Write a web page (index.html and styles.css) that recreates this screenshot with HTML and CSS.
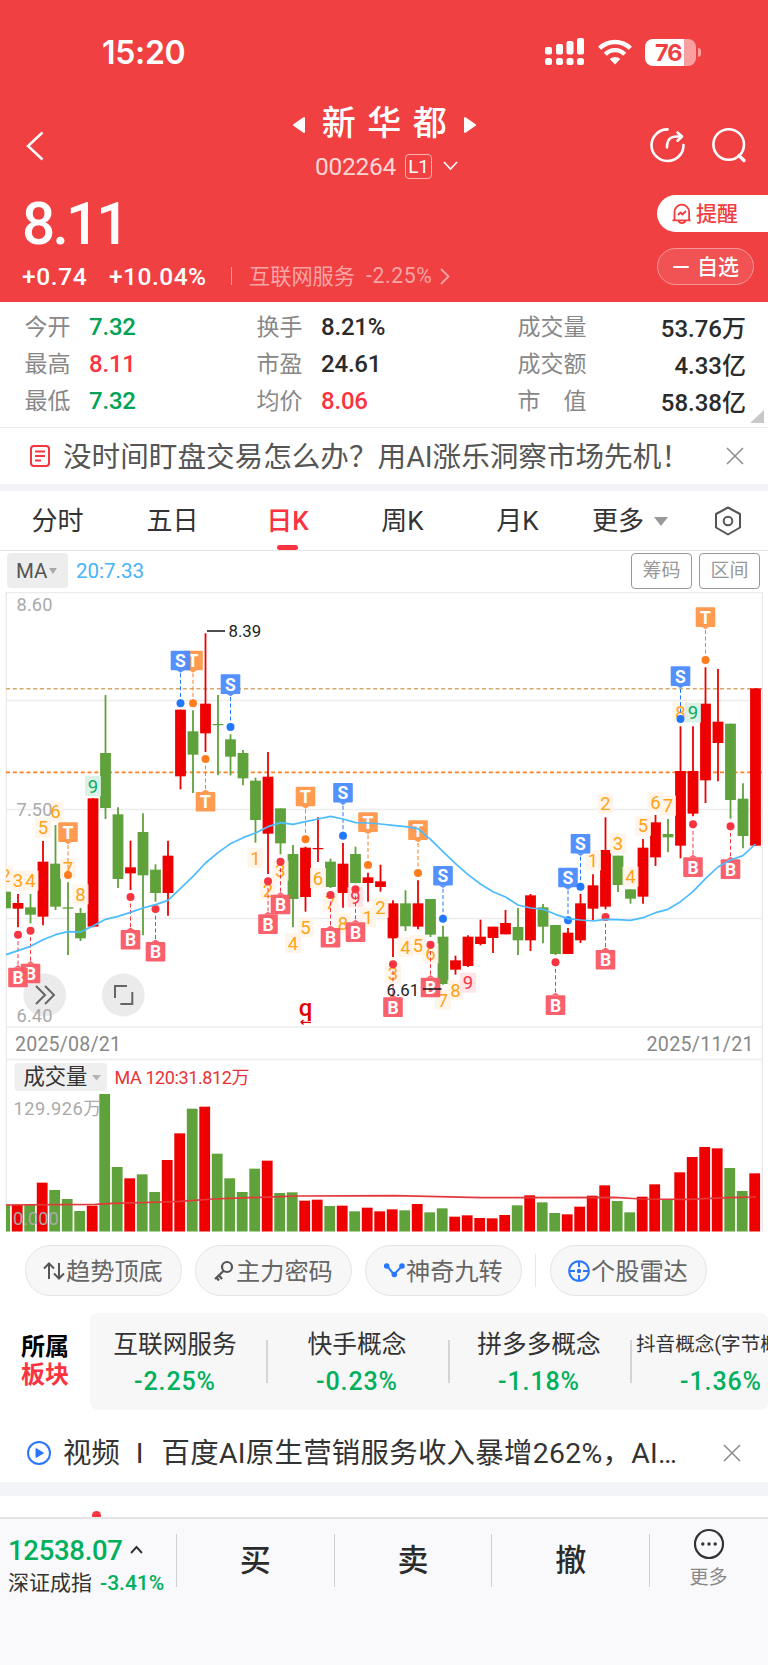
FILE: index.html
```html
<!DOCTYPE html>
<html lang="zh-CN">
<head>
<meta charset="utf-8">
<title>新华都 002264</title>
<link rel="stylesheet" href="styles.css">
</head>
<body>
<div class="app">
  <header class="head">
    <div class="status">
      <span class="clock">15:20</span>
      <svg class="signal" width="40" height="28" viewBox="0 0 40 28" fill="#fff"><rect x="0" y="9" width="7" height="7.5" rx="2"/><rect x="11" y="6" width="7" height="10.500" rx="2"/><rect x="21.500" y="3" width="7" height="13.500" rx="2"/><rect x="32" y="0" width="7" height="16.500" rx="2"/><rect x="0" y="20" width="7" height="7" rx="2.500"/><rect x="11" y="20" width="7" height="7" rx="2.500"/><rect x="21.500" y="20" width="7" height="7" rx="2.500"/><rect x="32" y="20" width="7" height="7" rx="2.500"/></svg>
      <svg class="wifi" width="36" height="26" viewBox="0 0 36 26" fill="none" stroke="#fff" stroke-width="4.400"><path d="M2.600 9.300a22 22 0 0 1 30.800 0"/><path d="M8.300 15.200a13.600 13.600 0 0 1 19.400 0"/><path d="M18 25.500l-5.300-5.400a7.600 7.600 0 0 1 10.600 0z" fill="#fff" stroke="none"/></svg>
      <span class="battery"><b>76</b></span>
      <i class="nub"></i>
    </div>
    <div class="nav">
      <svg class="back" width="20" height="30" viewBox="0 0 20 30"><path d="M17.500 1.500L3 15l14.500 13.500" fill="none" stroke="#fff" stroke-width="2.500"/></svg>
      <div class="title">
        <div class="name"><svg width="13" height="18" viewBox="0 0 13 18"><path d="M12 2v14L2 9z" fill="#fff" stroke="#fff" stroke-width="2" stroke-linejoin="round"/></svg><h1>新华都</h1><svg width="13" height="18" viewBox="0 0 13 18"><path d="M1 2v14l10-7z" fill="#fff" stroke="#fff" stroke-width="2" stroke-linejoin="round"/></svg></div>
        <div class="code"><span>002264</span><span class="lv">L1</span><svg width="15" height="10" viewBox="0 0 15 10"><path d="M1 1l6.500 7L14 1" fill="none" stroke="#fff" stroke-width="1.600"/></svg></div>
      </div>
      <svg class="share" width="36" height="36" viewBox="0 0 36 36" fill="none" stroke="#fff" stroke-width="2.600" stroke-linecap="round" stroke-linejoin="round"><path d="M17.500 2.400A16 15.800 0 1 0 33.500 18"/><path d="M17 20.500c0-7.500 3-11 10-11h5M27.500 5.500l4.500 4-4.500 4.200"/></svg>
      <svg class="search" width="36" height="36" viewBox="0 0 36 36" fill="none" stroke="#fff" stroke-width="2.600" stroke-linecap="round"><circle cx="17.700" cy="17.500" r="15.300"/><path d="M28 28.500l5 5" stroke-width="3.200"/></svg>
    </div>
    <div class="quote">
      <div>
        <div class="price">8.11</div>
        <div class="change"><span class="chg">+0.74</span><span class="pct">+10.04%</span><i class="vbar"></i><span class="ind">互联网服务</span><span class="indp">-2.25%</span><svg width="10" height="17" viewBox="0 0 10 17"><path d="M1 1l7.500 7.500L1 16" fill="none" stroke="#f9a5a6" stroke-width="1.800"/></svg></div>
      </div>
      <div class="acts">
        <div class="remind"><svg width="22" height="22" viewBox="0 0 22 22" fill="none" stroke="#f23c40" stroke-width="1.800" stroke-linejoin="round"><path d="M1.500 17.300h18M3.500 17V9a7.300 7.300 0 0 1 14.600 0v8M7.500 17.500c1 3.500 6 3.500 7 0M7 12l2.500-2.500 2 2L15 8"/></svg><span>提醒</span></div>
        <div class="fav"><i></i><span>自选</span></div>
      </div>
    </div>
  </header>

  <section class="stats">
    <div class="st"><span>今开</span><b class="down">7.32</b></div><div class="st"><span>换手</span><b>8.21%</b></div><div class="st last"><span>成交量</span><b>53.76万</b></div>
    <div class="st"><span>最高</span><b class="up">8.11</b></div><div class="st"><span>市盈</span><b>24.61</b></div><div class="st last"><span>成交额</span><b>4.33亿</b></div>
    <div class="st"><span>最低</span><b class="down">7.32</b></div><div class="st"><span>均价</span><b class="up">8.06</b></div><div class="st last"><span>市　值</span><b>58.38亿</b></div>
    <i class="corner"></i>
  </section>

  <section class="notice">
    <svg width="20" height="22" viewBox="0 0 20 22" fill="none" stroke="#f6353f" stroke-width="2"><rect x="1" y="1" width="18" height="20" rx="3"/><path d="M5 6.500h10M5 11h10M5 15.500h6"/></svg>
    <p>没时间盯盘交易怎么办？用AI涨乐洞察市场先机！</p>
    <svg class="x" width="18" height="18" viewBox="0 0 18 18"><path d="M1 1l16 16M17 1L1 17" stroke="#8a8a8a" stroke-width="1.500"/></svg>
  </section>

  <nav class="tabs">
    <a>分时</a><a>五日</a><a class="on">日K</a><a>周K</a><a>月K</a><a class="more">更多<i></i></a>
    <svg width="28" height="30" viewBox="0 0 28 30" fill="none" stroke="#555" stroke-width="2" stroke-linejoin="round"><path d="M14 1.500l12 6.500v13.500L14 28.500 2 21.500V8z"/><circle cx="14" cy="15" r="4.300"/></svg>
  </nav>

  <div class="mabar"><span class="chip">MA<i></i></span><span class="mav">20:7.33</span><span class="btn">筹码</span><span class="btn">区间</span></div>

  <svg class="chart" id="chart" width="768" height="640" viewBox="0 592 768 640"></svg>

  <div class="pills">
    <div class="pill"><svg width="23" height="20" viewBox="0 0 23 20" fill="none" stroke="#555" stroke-width="2"><path d="M6 18V2.500M1 7.500l5-5 5 5M16 2v15.500M21 12.500l-5 5-5-5"/></svg><span>趋势顶底</span></div>
    <div class="pill"><svg width="23" height="22" viewBox="0 0 23 22" fill="none" stroke="#555" stroke-width="2.200"><circle cx="14" cy="7" r="5"/><path d="M10.500 11L2 19M6 15.500l3 3.500M3.500 17.500l2.500 3"/></svg><span>主力密码</span></div>
    <div class="pill"><svg width="23" height="20" viewBox="0 0 23 20" fill="#2a77ff" stroke="#2a77ff" stroke-width="2"><path d="M4 5l7 8.500L19 5" fill="none"/><circle cx="3.700" cy="5" r="1.800"/><circle cx="11.300" cy="13.500" r="1.800"/><circle cx="19" cy="5" r="1.800"/></svg><span>神奇九转</span></div>
    <i class="sep"></i>
    <div class="pill"><svg width="23" height="22" viewBox="0 0 23 22" fill="none" stroke="#2a77ff" stroke-width="2"><circle cx="11" cy="11" r="9.800"/><path d="M11 1v6M11 15v6M1 11h6M15 11h6"/><circle cx="11" cy="11" r="1.200" fill="#2a77ff"/></svg><span>个股雷达</span></div>
  </div>

  <div class="sector">
    <div class="slabel"><span>所属</span><span class="up">板块</span></div>
    <div class="cells">
      <div class="cell"><span>互联网服务</span><b>-2.25%</b></div>
      <div class="cell"><span>快手概念</span><b>-0.23%</b></div>
      <div class="cell"><span>拼多多概念</span><b>-1.18%</b></div>
      <div class="cell small"><span>抖音概念(字节概念)</span><b>-1.36%</b></div>
    </div>
  </div>

  <section class="video">
    <svg width="26" height="26" viewBox="0 0 26 26"><circle cx="13" cy="13" r="11" fill="none" stroke="#2a77ff" stroke-width="2"/><path d="M10 8.500v9l7.500-4.500z" fill="#2a77ff" stroke="#2a77ff" stroke-linejoin="round"/></svg>
    <p><span class="vid">视频</span><span class="bar">I</span><span class="vt">百度AI原生营销服务收入暴增262%，AI…</span></p>
    <svg class="x" width="18" height="18" viewBox="0 0 18 18"><path d="M1 1l16 16M17 1L1 17" stroke="#8a8a8a" stroke-width="1.500"/></svg>
  </section>
  <div class="peek"><i></i></div>

  <footer class="foot">
    <div class="index"><div class="iv">12538.07<svg width="13" height="9" viewBox="0 0 13 9"><path d="M1 8l5.500-6L12 8" fill="none" stroke="#333" stroke-width="1.900"/></svg></div><div class="in"><span>深证成指</span><b>-3.41%</b></div></div>
    <div class="trade">买</div><div class="trade">卖</div><div class="trade">撤</div>
    <div class="fmore"><svg width="32" height="32" viewBox="0 0 32 32" fill="none" stroke="#333" stroke-width="2.200"><circle cx="16" cy="16" r="14"/><g fill="#333" stroke="none"><circle cx="9.800" cy="16" r="1.700"/><circle cx="16" cy="16" r="1.700"/><circle cx="22.200" cy="16" r="1.700"/></g></svg><span>更多</span></div>
  </footer>
</div>
<script src="chart.js"></script>
</body>
</html>
```
FILE: styles.css
```css
* { box-sizing: border-box; margin: 0; padding: 0; }
body { font-family: Roboto, "Noto Sans CJK SC", sans-serif; background: #fff; color: #333; }
i, b { font-style: normal; font-weight: 500; }
svg { display: block; flex: none; }
.app { width: 768px; height: 1665px; overflow: hidden; display: flex; flex-direction: column; }
.app > * { flex: none; }
.up { color: #fb3341; }
.down { color: #00a254; }

.head { height: 302px; background: #f04042; color: #fff; }
.status { height: 104px; display: flex; align-items: center; padding-left: 102px; }
.clock { font: 600 32px/40px Inter, sans-serif; letter-spacing: -0.3px; width: 443px; padding-top: 2px; }
.wifi { margin: 0 12px 0 12px; }
.battery { width: 51px; height: 27px; border-radius: 8px; background: linear-gradient(90deg, #fff 39px, #f89fa0 39px); color: #f04042; padding-left: 10px; font: 700 23.5px/27px Inter, sans-serif; letter-spacing: -1px; }
.battery b { font-weight: 700; }
.nub { width: 3px; height: 9px; margin-left: 2px; border-radius: 0 4px 4px 0; background: #f89fa0; }
.nav { height: 81px; display: flex; align-items: center; padding-left: 25px; }
.back { margin-top: 2px; }
.title { width: 605px; padding: 0 0 5px 74px; display: flex; flex-direction: column; align-items: center; }
.name { display: flex; align-items: center; height: 44px; margin-top: -3px; }
.name svg { margin-top: 2px; }
.name h1 { font-size: 34px; line-height: 44px; font-weight: 500; letter-spacing: 11.500px; margin: -2px 6px 0 17px; }
.code { display: flex; align-items: center; height: 26px; margin-top: 7px; font-size: 24.500px; letter-spacing: -0.3px; color: #fcd5d5; margin-left: 4px; }
.code svg { margin-left: 11px; }
.lv { margin-left: 9px; border: 1.500px solid #f9b1b2; border-radius: 4px; width: 27px; height: 25px; font-size: 19px; line-height: 23px; text-align: center; color: #fff; }
.share { margin-top: 1px; }
.search { margin: 1px 0 0 25px; }
.quote { display: flex; justify-content: space-between; height: 117px; }
.price { font-size: 58.500px; line-height: 58px; height: 73px; padding: 10px 0 0 22px; font-weight: 500; letter-spacing: -2.8px; }
.change { display: flex; align-items: center; height: 36px; padding-left: 22px; font-size: 24.500px; font-weight: 500; }
.chg { width: 87px; letter-spacing: .6px; }
.pct { width: 122px; letter-spacing: .5px; }
.vbar { width: 1px; height: 18px; background: #f79a9b; margin-right: 17px; }
.ind, .indp { font-size: 21.200px; font-weight: 400; color: #f9a5a6; }
.ind { width: 117px; margin-top: -3px; }
.indp { letter-spacing: .6px; width: 74px; margin-top: -2px; }
.acts { width: 111px; font-size: 21px; font-weight: 500; }
.acts span { margin-top: -3px; }
.remind { margin-top: 10px; height: 37px; border-radius: 19px 0 0 19px; background: #fff; color: #f23c40; display: flex; align-items: center; gap: 3px; padding-left: 14px; }
.fav { margin-top: 16px; width: 97px; height: 37px; border-radius: 19px; border: 1px solid #f7999a; background: #f15254; display: flex; align-items: center; gap: 8px; padding-left: 15px; }
.fav i { width: 16px; height: 2px; background: #fff; border-radius: 1px; }

.stats { position: relative; height: 126px; border-bottom: 1.500px solid #ececec; display: grid; grid-template-columns: 232px 261px 228px; grid-auto-rows: 37.300px; padding: 6px 0 0 25px; }
.st { display: flex; align-items: center; font-size: 23px; color: #888; }
.st span { margin: -4px 0 0 -0.5px; }
.st b { margin-left: 18.500px; font-size: 24px; color: #2b2b2b; letter-spacing: -.2px; }
.st b.up { color: #fb3341; }
.st b.down { color: #00a254; }
.last { justify-content: space-between; }
.st.last b { margin-top: -1px; letter-spacing: 0; }
.corner { position: absolute; right: 4px; bottom: 4px; border: solid transparent; border-width: 13px 0 0 14px; border-bottom: 13px solid #c8c8c8; border-top: 0; }

.notice { height: 63px; border-bottom: 7px solid #f2f4f8; display: flex; align-items: center; padding-left: 30px; }
.notice p { font-size: 28.600px; line-height: 40px; margin: 2px 0 0 13px; width: 663px; color: #555; white-space: nowrap; }

.tabs { height: 60px; border-bottom: 1.500px solid #e6e6e6; display: flex; align-items: center; font-size: 26px; color: #333; }
.tabs a { width: 115px; height: 100%; line-height: 61px; text-align: center; position: relative; }
.tabs a.on { color: #fb3341; font-weight: 500; }
.tabs a.on::after { content: ""; position: absolute; left: 47px; bottom: 0; width: 21px; height: 5px; border-radius: 2.500px; background: #fb3341; }
.tabs a.more { width: 139px; padding: 2px 0 0 17px; display: flex; align-items: center; }
.more i { margin-left: 10px; border: solid transparent; border-width: 9px 7px 0; border-top-color: #999; }

.mabar { height: 41px; display: flex; align-items: center; padding: 0 8px 2px 7px; }
.chip { width: 61px; height: 35px; border-radius: 4px; background: #ededed; color: #555; font-size: 20.500px; display: flex; align-items: center; padding-left: 9px; }
.chip i { margin-left: 2px; border: solid transparent; border-width: 6px 4.500px 0; border-top-color: #aaa; }
.mav { margin-left: 8px; font-size: 20.500px; color: #45b5f8; flex: 1; }
.btn { width: 61px; height: 36px; border: 1.500px solid #999; border-radius: 4px; color: #999; font-size: 19px; line-height: 34px; text-align: center; margin-left: 7px; }

.chart text { font-family: Roboto, "Noto Sans CJK SC", sans-serif; }

.pills { display: flex; align-items: center; padding: 13px 0 0 25px; gap: 13px; }
.pill { width: 157px; height: 51px; border: 1px solid #e4e4e4; border-radius: 26px; background: #f7f7f7; display: flex; align-items: center; padding-left: 17px; font-size: 24.200px; color: #666; white-space: nowrap; }
.pill span { margin-top: -3px; }
.sep { width: 1px; height: 33px; background: #e8e8e8; margin-right: 1px; }

.sector { height: 97px; margin-top: 17px; display: flex; }
.slabel { width: 90px; padding: 20px 0 0 21px; font-size: 24px; line-height: 28px; font-weight: 700; color: #000; display: flex; flex-direction: column; }
.slabel .up { color: #fb3341; }
.cells { width: 678px; background: #f7f7f7; border-radius: 8px; display: flex; overflow: hidden; }
.cell { flex: none; width: 182px; position: relative; display: flex; flex-direction: column; align-items: center; white-space: nowrap; font-size: 24.700px; }
.cell:first-child { width: 176px; padding-right: 6px; }
.cell span { line-height: 36px; margin-top: 14px; }
.cell b { color: #00b05c; font-size: 25px; line-height: 36px; margin-top: 1px; letter-spacing: .9px; }
.cell + .cell::before { content: ""; position: absolute; left: 0; top: 27px; width: 1.500px; height: 43px; background: #d4d4d4; }
.cell.small span { font-size: 19.600px; align-self: flex-start; margin-left: 6px; }

.video { height: 72px; display: flex; align-items: center; padding: 13px 0 0 26px; }
.video p { margin: 2px 0 0 11px; width: 660px; display: flex; font-size: 28.400px; line-height: 40px; color: #333; white-space: nowrap; }
.bar { margin: 0 18px 0 16px; }
.vt { letter-spacing: .3px; }
.peek { height: 35px; border-top: 14px solid #f2f4f8; overflow: hidden; }
.peek i { display: block; width: 9px; height: 9px; border-radius: 50%; background: #fb3341; margin: 15px 0 0 92px; }

.foot { height: 148px; background: #f9f9fb; border-top: 2px solid #e5e5e8; display: flex; padding-top: 15px; }
.index { width: 176px; padding-left: 8px; }
.iv { display: flex; align-items: center; gap: 7px; color: #00b05c; font-size: 27.500px; line-height: 34px; font-weight: 500; letter-spacing: -.3px; }
.iv svg { margin-top: -4px; }
.in { display: flex; gap: 8px; font-size: 21px; line-height: 31px; white-space: nowrap; }
.in b { color: #00b05c; }
.trade { width: 157.700px; height: 53px; border-left: 1px solid #d0d0d3; text-align: center; font-size: 31px; line-height: 53px; font-weight: 500; color: #2b2b2b; }
.fmore { width: 118px; height: 53px; border-left: 1px solid #d0d0d3; display: flex; flex-direction: column; align-items: center; font-size: 19px; color: #888; }
.fmore svg { margin-top: -6px; }
.fmore span { line-height: 28px; margin-top: 4px; }
```
FILE: chart.js
```js
const RED = '#ee0000', GREEN = '#5fa13a';
// Vertical values are thirds of a pixel below their pane's origin
const Y = v => 590 + v / 3, V = v => 1030 + v / 3, X = i => 5.5 + 12.5 * i;
// colour, high, body top, body bottom, low
const candles = `g905,905,955,955 r912,939,956,1012 g912,952,974,1000 r753,815,980,1006 g705,821,950,960 g877,952,956,1095 g954,969,1045,1053 r625,625,1010,1012 g315,489,654,687 g652,673,867,894
r752,832,850,900 g670,726,856,1036 g823,839,909,935 r752,797,909,977 r359,359,559,598 g361,424,494,609 r130,341,430,486 g315,402,405,556 g433,448,500,556 g480,489,565,586
g563,572,690,758 r486,560,731,852 g655,655,760,793 g765,792,927,1012 r770,773,921,965 r682,774,777,816 g806,815,891,894 r759,821,909,953 g770,792,879,880 r848,862,879,935
r824,874,891,905 r931,940,1045,1101 g901,940,1009,1023 r871,940,1010,1018 g927,927,1034,1041 g1007,1040,1182,1184 r1097,1111,1139,1154 r1036,1040,1128,1131 r989,1040,1062,1066 r1010,1010,1044,1089
r960,999,1033,1033 g954,1011,1051,1095 r912,916,1051,1083 g942,952,1010,1060 g1005,1005,1092,1095 r1014,1028,1092,1092 r912,940,1051,1059 r853,886,956,990 r682,780,950,958 g797,797,885,906
g898,898,926,941 r747,773,920,941 r675,697,802,828 g687,732,742,787 r409,543,767,805 r409,543,671,679 r232,341,571,639 r237,395,459,574 g401,401,630,686 g580,626,738,775 r295,295,767,767`
  .split(/\s+/).map(s => [s[0] === 'r' ? RED : GREEN, ...s.slice(1).split(',').map(Number)]);
const ma = [1094,1082,1069,1049,1034,1025,1026,1008,988,979,967,954,944,931,895,859,819,788,761,743,729,710,698,703,695,687,679,687,698,699,702,706,710,716,748,785,821,854,882,905,921,945,954,958,973,986,990,993,988,989,991,983,968,958,935,905,866,831,810,797,762];
const vol = [524,524,522,458,480,507,543,527,192,411,445,433,486,390,310,236,230,371,445,486,416,392,489,487,512,509,528,527,544,533,544,538,541,522,547,535,560,556,564,565,555,526,496,517,549,553,530,497,466,513,547,500,463,507,427,381,351,355,414,483,430];
// index, label, centre, tone
const counts = [[0,2,857],[1,3,872],[2,4,872],[3,5,713],[4,6,665],[5,7,836],[6,8,913],[7,9,588,'g'],[20,1,804],[21,2,900],[22,3,842],[23,4,1059],[24,5,1012],[25,6,864],[26,7,938],[27,8,1000],[28,9,922,'r'],[29,1,982],[30,2,953],[31,3,1149],[32,4,1071],[33,5,1065],[34,6,1090],[35,7,1230],[36,8,1200],[37,9,1178,'r'],[47,1,811],[48,2,641],[49,3,760],[50,4,860],[51,5,707],[52,6,636],[53,7,647],[54,8,366],[55,9,368,'g']];
// index, letter, dot position, side (-1 above, 1 below)
const tags = [[5,'T',855,-1],[15,'T',340,-1],[14,'S',340,-1],[18,'S',411,-1],[24,'T',748,-1],[27,'S',737,-1],[29,'T',825,-1],[33,'T',849,-1],[35,'S',986,-1],[45,'S',991,-1],[46,'S',890,-1],[54,'S',387,-1],[56,'T',210,-1],[16,'T',507,1],[2,'B',1022,1],[1,'B',1034,1],[10,'B',921,1],[12,'B',957,1],[21,'B',874,1],[22,'B',815,1],[26,'B',915,1],[28,'B',898,1],[31,'B',1123,1],[34,'B',1064,1],[44,'B',1117,1],[48,'B',981,1],[55,'B',703,1],[58,'B',709,1]];
const tagColors = { S: ['#4b8dff', '#2277ff'], T: ['#ff984c', '#ff7d1e'], B: ['#fa5b67', '#f83441'] };
const tones = { o: ['#fff3e6', '#ffa216'], g: ['#d3f1e2', '#0eab60'], r: ['#ffe0e2', '#f83441'] };

let s = '';
const rect = (x, y, w, h, f, extra = '') => s += `<rect x="${x}" y="${y}" width="${w}" height="${h}" fill="${f}" ${extra}/>`;
const line = (x1, y1, x2, y2, c, w, extra = '') => s += `<line x1="${x1}" y1="${y1}" x2="${x2}" y2="${y2}" stroke="${c}" stroke-width="${w}" ${extra}/>`;
const text = (x, cy, t, size, fill, extra = '') => s += `<text x="${x}" y="${cy + size * 0.355}" font-size="${size}" fill="${fill}" ${extra}>${t}</text>`;

s += '<clipPath id="c"><rect x="6" y="592" width="757" height="640"/></clipPath>';
[592.5, 700.5, 809.5, 918.5, 1027, 1059.5].forEach(y => line(6, y, 762, y, '#ececec', 1.3));
line(6.3, 592, 6.300, 1232, '#e9e9ec', 1.3);
line(762.3, 592, 762.3, 1232, '#e9e9ec', 1.3);
line(6, 688.7, 762, 688.7, '#d8a869', 1.5, 'stroke-dasharray="4 2.8"');
line(6, 772.4, 762, 772.4, '#ff8126', 1.7, 'stroke-dasharray="4 2.8"');
s += '<g clip-path="url(#c)">';
candles.forEach(([c, h, t, b, l], i) => {
  line(X(i), Y(h), X(i), Y(l), c, 1.8);
  rect(X(i) - 5.4, Y(t), 10.8, Math.max(Y(b) - Y(t), 1.2), c);
});
counts.forEach(([i, n, y, tone = 'o']) => {
  rect(X(i) - 8, Y(y) - 10, 16, 20, tones[tone][0], 'opacity=".85"');
  text(X(i), Y(y), n, 18.5, tones[tone][1], 'text-anchor="middle"');
});
s += '</g>';
text(16.5, 605, '8.60', 18.2, '#aaa', 'textLength="36"');
text(16.5, 810, '7.50', 18.2, '#aaa', 'textLength="36"');
[44.7, 123.3].forEach(x => s += `<circle cx="${x}" cy="995" r="21.400" fill="#e8e8e8" opacity=".88"/>`);
s += '<path d="M36 986l9 9-9 9M45 986l9 9-9 9M115 998v-12h12M132.300 992v12h-12" fill="none" stroke="#666" stroke-width="2"/>';
text(16.5, 1015.3, '6.40', 18.2, '#aaa', 'textLength="36"');
tags.forEach(([i, t, dot, d]) => {
  const x = X(i), y = Y(dot), [fill, strong] = tagColors[t];
  const top = d < 0 ? y - 52.7 : y + 33, tip = d < 0 ? top + 22 : top - 2.6, base = d < 0 ? top + 19.4 : top;
  line(x, y, x, tip, strong, 1, 'stroke-dasharray="4 2.5"');
  s += `<circle cx="${x}" cy="${y}" r="4" fill="${strong}"/>`;
  s += `<g opacity=".96"><rect x="${x - 9.8}" y="${top}" width="19.6" height="19.600" rx="1" fill="${fill}"/><path d="M${x - 4} ${base}L${x} ${tip}L${x + 4} ${base}z" fill="${fill}"/></g>`;
  text(x, top + 10, t, 17.5, '#fff', 'text-anchor="middle" font-weight="700"');
});
s += `<polyline points="${ma.map((v, i) => `${Math.max(X(i), 6)},${Y(v)}`).join(' ')}" fill="none" stroke="#4dbcff" stroke-width="1.7" stroke-linejoin="round"/>`;
line(207, 631, 225, 631, '#111', 1.5);
text(228.5, 631.5, '8.39', 16.8, '#222');
line(423, 989, 441.5, 989, '#111', 1.5);
text(386.5, 990, '6.61', 16.8, '#222');
text(305.5, 1007, 'q', 24, '#e60000', 'text-anchor="middle" font-weight="500"');
s += '<path d="M311 1022.300h-10M303.500 1020l-2.500 2.300 2.500 2.300" fill="none" stroke="#e60000" stroke-width="1.300"/>';
text(15, 1044, '2025/08/21', 19.6, '#888', 'textLength="106"');
text(646.500, 1044, '2025/11/21', 19.6, '#888', 'textLength="107"');

s += '<g clip-path="url(#c)">';
vol.forEach((v, i) => rect(X(i) - 6.2, V(v), 10.8, 1231.5 - V(v), candles[i][0]));
s += '</g>';
const vma = [[6,525],[95,523],[113,520],[163,516],[180,514],[213,507],[297,498],[395,497],[481,503],[615,502],[641,507],[688,508],[728,503],[756,501]];
s += `<polyline points="${vma.map(([x, y]) => x + ',' + V(y)).join(' ')}" fill="none" stroke="#e4393c" stroke-width="1.700"/>`;
rect(14.500, 1063, 92.500, 28, '#efefef', 'rx="4"');
text(23.500, 1076.5, '成交量', 21.3, '#333');
s += '<path d="M92 1075h9l-4.500 5.500z" fill="#b5b5b5"/>';
text(114.500, 1078, 'MA 120:31.812万', 18, '#ea3237', 'textLength="135"');
text(13.500, 1109, '129.926万', 18.2, '#aaa', 'textLength="88"');
text(13, 1218.500, '0.000', 18.2, '#aaa');
document.getElementById('chart').innerHTML = s;
```
